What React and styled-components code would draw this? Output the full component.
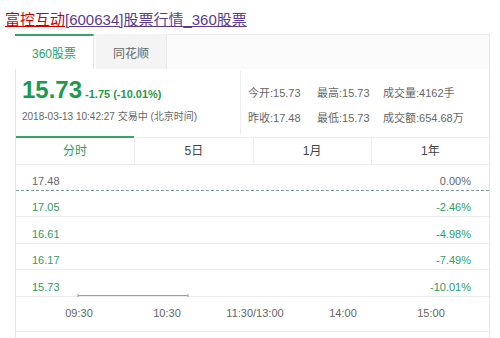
import React from "react"
import styled, { createGlobalStyle } from "styled-components"

const GlobalStyle = createGlobalStyle`
  body {
    margin: 0;
    background: #fff;
    font-family: "Liberation Sans", "Noto Sans CJK SC", Arial, sans-serif;
  }
`

const Page = styled.div`
  width: 500px;
  height: 338px;
  overflow: hidden;
`

const Title = styled.div`
  padding: 10px 0 0 5px;
  height: 24px;
  box-sizing: border-box;
  font-size: 15px;
  line-height: 19px;
`

const TitlePart = styled.span`
  color: ${(p) => (p.$hit ? "#cc0000" : "#5a3a90")};
  text-decoration: underline;
`

const Card = styled.div`
  margin: 10px 0 0 15px;
  width: 475px;
  border-left: 1px solid #e6e6e6;
  border-right: 1px solid #e6e6e6;
  box-sizing: border-box;
`

const SourceTabs = styled.div`
  display: flex;
  height: 34px;
  margin-left: -1px;
  border-top: 1px solid #eeeeee;
  background: #fbfbfb;
`

const SourceTab = styled.div`
  width: ${(p) => (p.$active ? "78px" : "70px")};
  margin-left: ${(p) => (p.$active ? "0" : "2px")};
  display: flex;
  align-items: center;
  justify-content: center;
  font-size: 12px;
  color: ${(p) => (p.$active ? "#2c9f5c" : "#666")};
  background: ${(p) => (p.$active ? "#fff" : "#f4f4f4")};
  border-top: 2px solid ${(p) => (p.$active ? "#3aa36a" : "transparent")};
  border-right: 1px solid #e8e8e8;
  margin-top: -1px;
`

const Info = styled.div`
  display: flex;
  height: 68px;
`

const PriceBlock = styled.div`
  width: 225px;
  padding: 5px 0 0 6px;
  box-sizing: border-box;
  border-right: 1px solid #eeeeee;
  margin: 2px 0;
`

const PriceLine = styled.div`
  display: flex;
  align-items: baseline;
  height: 28px;
  line-height: 28px;
  color: #1d9a4b;
  font-weight: bold;
`

const Price = styled.span`
  font-size: 24px;
  margin-right: 3px;
`

const Change = styled.span`
  font-size: 11px;
`

const DateLine = styled.div`
  margin-top: 7px;
  font-size: 10px;
  line-height: 12px;
  color: #666;
`

const Stats = styled.div`
  display: grid;
  grid-template-columns: 69px 66px auto;
  grid-auto-rows: 25px;
  align-content: start;
  align-items: center;
  padding: 11px 0 0 7px;
  font-size: 11px;
  line-height: 14px;
  color: #666;
`

const PeriodTabs = styled.div`
  display: grid;
  grid-template-columns: repeat(4, 1fr);
  height: 26px;
  border-bottom: 1px solid #eeeeee;
  border-top: 1px solid #eeeeee;
`

const PeriodTab = styled.div`
  display: flex;
  align-items: center;
  justify-content: center;
  padding-bottom: 3px;
  font-size: 12px;
  color: ${(p) => (p.$active ? "#2c9f5c" : "#444")};
  border-top: 2px solid ${(p) => (p.$active ? "#3aa36a" : "transparent")};
  margin-top: -2px;
  border-left: ${(p) => (p.$first ? "none" : "1px solid #eeeeee")};
`

const Chart = styled.div`
  position: relative;
`

const GridRow = styled.div`
  display: flex;
  justify-content: space-between;
  align-items: flex-end;
  height: ${(p) => p.$h}px;
  box-sizing: border-box;
  padding: 0 18px 3px 16px;
  border-bottom: 1px ${(p) => (p.$dashed ? "dashed #7f9a9a" : "solid #ececec")};
  font-size: 11px;
  color: ${(p) => (p.$base ? "#666" : "#2f9a62")};
`

const DataLine = styled.svg`
  position: absolute;
  left: 61px;
  bottom: -1px;
`

const TimeAxis = styled.div`
  display: grid;
  grid-template-columns: repeat(5, 88px);
  height: 35px;
  padding-left: 19px;
  border-bottom: 1px solid #ececec;
  box-sizing: border-box;
`

const TimeLabel = styled.div`
  display: flex;
  align-items: center;
  justify-content: center;
  padding-bottom: 2px;
  font-size: 11px;
  color: #666;
`

const rows = [
  ["17.48", "0.00%", 26],
  ["17.05", "-2.46%", 26],
  ["16.61", "-4.98%", 27],
  ["16.17", "-7.49%", 26],
  ["15.73", "-10.01%", 27],
]

const times = ["09:30", "10:30", "11:30/13:00", "14:00", "15:00"]

export default function App() {
  return (
    <Page>
      <GlobalStyle />
      <Title>
        <TitlePart $hit>富控互动</TitlePart>
        <TitlePart>[600634]股票行情_360股票</TitlePart>
      </Title>
      <Card>
        <SourceTabs>
          <SourceTab $active>360股票</SourceTab>
          <SourceTab>同花顺</SourceTab>
        </SourceTabs>
        <Info>
          <PriceBlock>
            <PriceLine>
              <Price>15.73</Price>
              <Change>-1.75 (-10.01%)</Change>
            </PriceLine>
            <DateLine>2018-03-13 10:42:27 交易中 (北京时间)</DateLine>
          </PriceBlock>
          <Stats>
            <span>今开:15.73</span>
            <span>最高:15.73</span>
            <span>成交量:4162手</span>
            <span>昨收:17.48</span>
            <span>最低:15.73</span>
            <span>成交额:654.68万</span>
          </Stats>
        </Info>
        <PeriodTabs>
          <PeriodTab $active $first>分时</PeriodTab>
          <PeriodTab>5日</PeriodTab>
          <PeriodTab>1月</PeriodTab>
          <PeriodTab>1年</PeriodTab>
        </PeriodTabs>
        <Chart>
          {rows.map(([price, pct, h], i) => (
            <GridRow key={price} $h={h} $dashed={i === 0} $base={i === 0}>
              <span>{price}</span>
              <span>{pct}</span>
            </GridRow>
          ))}
          <DataLine width="112" height="4" viewBox="0 0 112 4">
            <line x1="1" y1="1.5" x2="111" y2="1.5" stroke="#8ea2b4" strokeWidth="1" />
            <line x1="1" y1="0" x2="1" y2="3" stroke="#8ea2b4" strokeWidth="1" />
            <line x1="111" y1="0" x2="111" y2="3" stroke="#8ea2b4" strokeWidth="1" />
          </DataLine>
        </Chart>
        <TimeAxis>
          {times.map((t) => (
            <TimeLabel key={t}>{t}</TimeLabel>
          ))}
        </TimeAxis>
        <div style={{ height: 10 }} />
      </Card>
    </Page>
  )
}
